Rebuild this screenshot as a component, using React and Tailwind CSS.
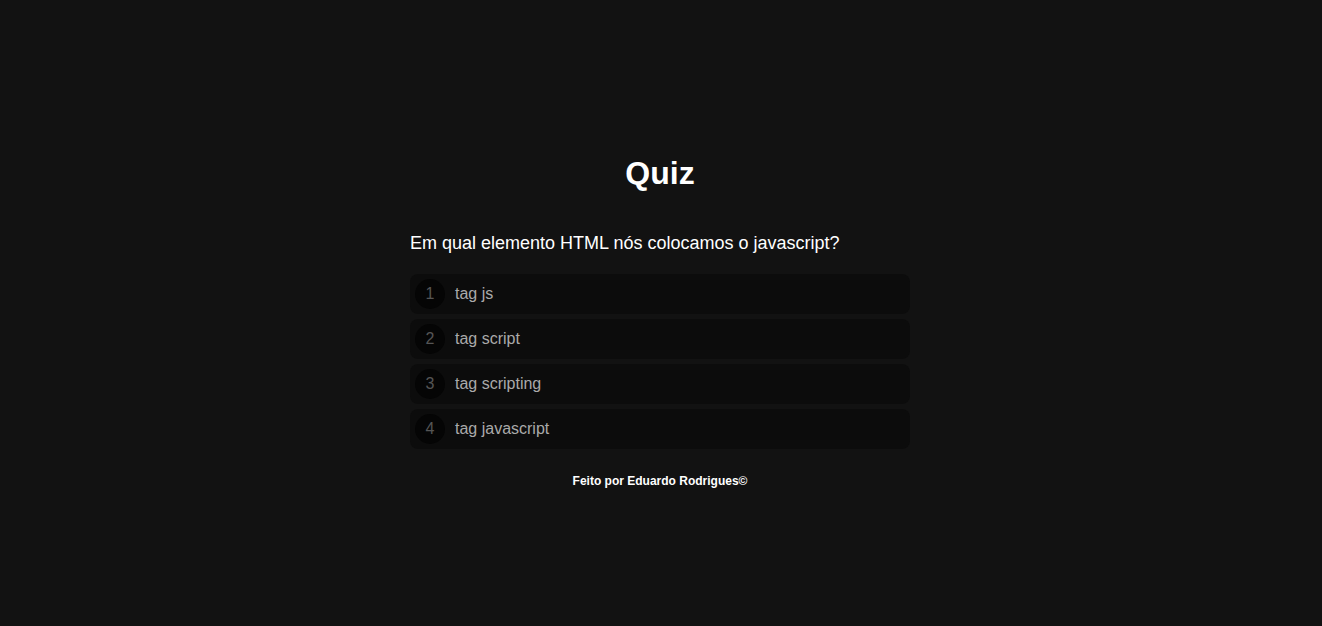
import React from 'react'

const options = ['tag js', 'tag script', 'tag scripting', 'tag javascript']

export default function App(){
  return (
    <div className="min-h-screen w-full bg-[#121212] text-white flex flex-col items-center pt-[155px] pr-[2px]" style={{fontFamily:'"Liberation Sans", Arial, sans-serif'}}>
      <h1 className="text-[32px] font-bold leading-[37px]">Quiz</h1>
      <div className="w-[500px] mt-[41px]">
        <p className="text-[18px] leading-[21px]">Em qual elemento HTML nós colocamos o javascript?</p>
        <div className="mt-[20px] flex flex-col gap-[5px]">
          {options.map((o,i)=>(
            <div key={o} className="h-[40px] rounded-lg bg-[#0c0c0c] flex items-center pl-[5px] gap-[10px] cursor-pointer">
              <span className="w-[30px] h-[30px] rounded-full bg-[#050505] flex items-center justify-center text-[16px] text-[#555555]">{i+1}</span>
              <span className="text-[16px] text-[#aaaaaa]">{o}</span>
            </div>
          ))}
        </div>
      </div>
      <footer className="mt-[25px] text-[12px] font-bold leading-[14px]">Feito por Eduardo Rodrigues©</footer>
    </div>
  )
}
